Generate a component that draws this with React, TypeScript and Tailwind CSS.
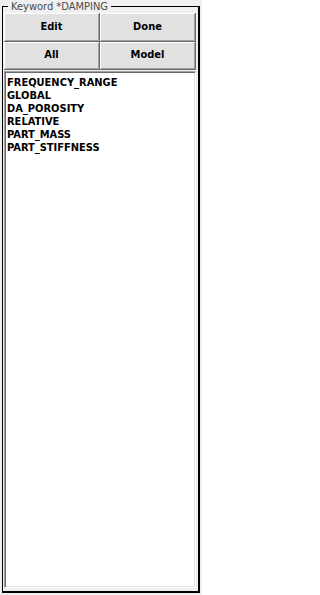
const keywords = [
  "FREQUENCY_RANGE",
  "GLOBAL",
  "DA_POROSITY",
  "RELATIVE",
  "PART_MASS",
  "PART_STIFFNESS",
];

// Tahoma-ish look: DejaVu Sans Condensed is the closest installed match
const font = { fontFamily: '"DejaVu Sans Condensed", "DejaVu Sans", sans-serif' };

function PanelButton({ label }: { label: string }) {
  return (
    <button
      type="button"
      className="flex items-center justify-center bg-[#e1e1e1] text-[11px] font-bold text-black border-r border-b border-[#696969] shadow-[inset_1px_1px_0_#ffffff,inset_-1px_-1px_0_#a0a0a0]"
    >
      {label}
    </button>
  );
}

export default function App() {
  return (
    <div className="w-[202px] h-[595px] overflow-hidden bg-[#f0f0f0]" style={font}>
      <fieldset className="ml-[2px] w-[198px] h-[593px] flex flex-col border-t border-l border-r-2 border-b-2 border-black pl-px pr-[2px] pb-[3px]">
        <legend className="ml-[4px] px-[3px] text-[11px] leading-[13px] text-[#4a4a4a]">
          Keyword *DAMPING
        </legend>
        <div className="grid grid-cols-2 grid-rows-[29px_28px]">
          <PanelButton label="Edit" />
          <PanelButton label="Done" />
          <PanelButton label="All" />
          <PanelButton label="Model" />
        </div>
        <div className="flex-1 mt-px bg-white border-t border-l border-[#a0a0a0] border-r border-b border-r-white border-b-white shadow-[inset_1px_1px_0_#696969,inset_-1px_-1px_0_#e3e3e3] px-[2px] pt-[4px]">
          {keywords.map((k) => (
            <div key={k} className="text-[11px] leading-[13px] font-bold text-black">
              {k}
            </div>
          ))}
        </div>
      </fieldset>
    </div>
  );
}
